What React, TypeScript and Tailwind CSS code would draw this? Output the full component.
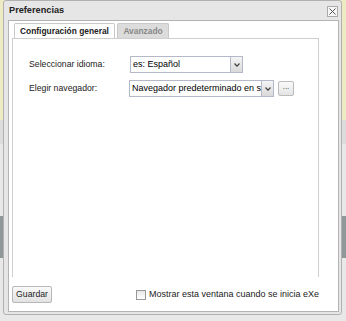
import React from 'react'

function Select({ value, width }: { value: string; width: string }) {
  return (
    <div className={`flex h-[17px] items-stretch border border-[#b5b8c8] bg-white ${width}`}>
      <div className="flex-1 overflow-hidden whitespace-nowrap pl-[2px] text-[9px] leading-[15px] text-black">{value}</div>
      <div className="flex w-[12px] items-center justify-center border-l border-[#b5b8c8] bg-gradient-to-b from-[#f4f4f4] to-[#dadada]">
        <svg width="6" height="4" viewBox="0 0 6 4"><path d="M0.5 0.5L3 3.2 5.5 0.5" fill="none" stroke="#444" strokeWidth="1.2" /></svg>
      </div>
    </div>
  )
}

export default function App() {
  return (
    <div className="relative h-[321px] w-[346px] overflow-hidden bg-[#e8e8e8] font-['Liberation_Sans',Arial,sans-serif]">
      <div className="absolute inset-x-0 top-0 h-[120px] bg-[#ecebc4]" />
      <div className="absolute inset-x-0 top-[120px] h-[24px] bg-[#dcdcdc]" />
      <div className="absolute inset-x-0 top-[216px] h-[42px] bg-[#8f9898]" />
      <div className="absolute left-[3px] top-0 flex h-[315px] w-[339px] flex-col rounded-[3px] border border-[#b4b0b0] bg-[#e6e6e6] pb-[2px] pl-[4px] pr-[2px]">
        <div className="flex h-[19px] shrink-0 items-center justify-between pl-[1px] pr-[1px]">
          <span className="text-[9.2px] font-bold text-[#222]">Preferencias</span>
          <div className="mt-[1px] flex h-[11px] w-[11px] items-center justify-center border border-[#aaa] bg-[#f6f6f6]">
            <svg width="7" height="7" viewBox="0 0 7 7"><path d="M0.5 0.5l6 6M6.5 0.5l-6 6" stroke="#555" strokeWidth="1" /></svg>
          </div>
        </div>
        <div className="flex flex-1 flex-col border border-[#b3b3b3] bg-white pl-[3px] pr-[19px] pt-[2px]">
          <div className="flex h-[254px] shrink-0 flex-col">
            <div className="flex gap-[2px] pl-[2px]">
              <div className="flex h-[15px] w-[101px] items-center justify-center rounded-t-[2px] border border-b-0 border-[#c8c8c8] bg-white text-[8.4px] font-bold text-[#222]">Configuración general</div>
              <div className="flex h-[15px] w-[52px] items-center justify-center rounded-t-[2px] border border-b-0 border-[#c8c8c8] bg-[#dcdcdc] text-[8.4px] font-bold text-[#888]">Avanzado</div>
            </div>
            <div className="flex flex-1 flex-col gap-[7px] border-x border-t border-[#cfcfcf] pl-[16px] pt-[17px]">
              <div className="flex items-center">
                <span className="w-[101px] text-[8.7px] text-[#222]">Seleccionar idioma:</span>
                <Select value="es: Español" width="w-[113px]" />
              </div>
              <div className="flex items-center">
                <span className="w-[100px] text-[8.7px] text-[#222]">Elegir navegador:</span>
                <Select value="Navegador predeterminado en su sistema" width="w-[145px]" />
                <div className="ml-[4px] flex h-[15px] w-[16px] items-center justify-center rounded-[2px] border border-[#bbb] bg-gradient-to-b from-[#fafafa] to-[#e4e4e4] pb-[3px] text-[8px] leading-none text-[#333]">...</div>
              </div>
            </div>
          </div>
          <div className="flex items-center justify-between pt-[9px]">
            <div className="flex h-[17px] w-[40px] items-center justify-center rounded-[2px] border border-[#b8b8b8] bg-gradient-to-b from-[#fafafa] to-[#e2e2e2] text-[8.7px] text-[#222]">Guardar</div>
            <div className="flex items-center gap-[3px]">
              <div className="h-[10px] w-[10px] border border-[#999] bg-gradient-to-b from-[#e8e8e8] to-[#fff]" />
              <span className="text-[9px] text-[#222]">Mostrar esta ventana cuando se inicia eXe</span>
            </div>
          </div>
        </div>
      </div>
    </div>
  )
}
